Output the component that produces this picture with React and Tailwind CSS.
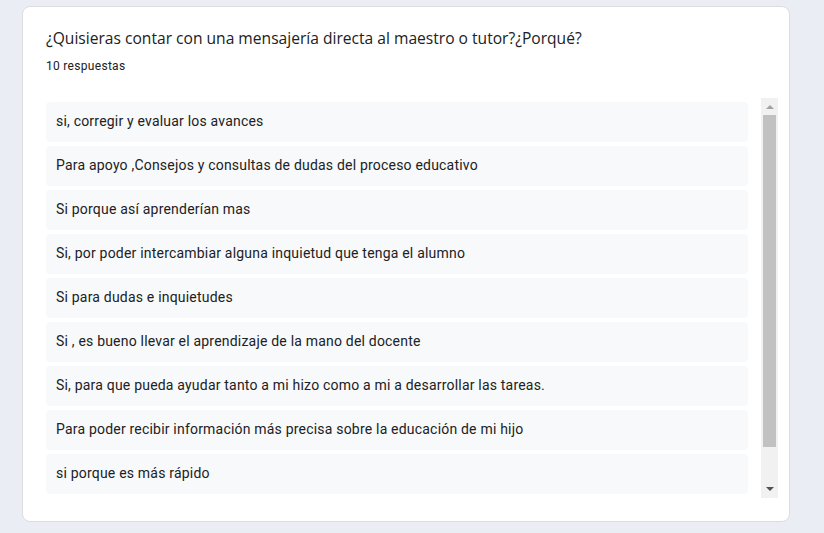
const answers = [
  "si, corregir y evaluar los avances",
  "Para apoyo ,Consejos y consultas de dudas del proceso educativo",
  "Si porque así aprenderían mas",
  "Si, por poder intercambiar alguna inquietud que tenga el alumno",
  "Si para dudas e inquietudes",
  "Si , es bueno llevar el aprendizaje de la mano del docente",
  "Si, para que pueda ayudar tanto a mi hizo como a mi a desarrollar las tareas.",
  "Para poder recibir información más precisa sobre la educación de mi hijo",
  "si porque es más rápido",
]

function Scrollbar() {
  return (
    <div className="flex w-[17px] shrink-0 flex-col bg-[#f1f1f1]">
      <div className="flex h-[17px] items-center justify-center">
        <svg width="8" height="5" viewBox="0 0 8 5">
          <path d="M0 5 L4 1 L8 5 Z" fill="#a3a3a3" />
        </svg>
      </div>
      <div className="mx-[2px] h-[332px] bg-[#c1c1c1]" />
      <div className="flex-1" />
      <div className="flex h-[17px] items-center justify-center">
        <svg width="8" height="5" viewBox="0 0 8 5">
          <path d="M0 0 L4 4 L8 0 Z" fill="#505050" />
        </svg>
      </div>
    </div>
  )
}

export default function App() {
  return (
    <div className="min-h-[533px] bg-[#ebedf5] pt-[6px] pl-[22px]">
      <div className="w-[768px] h-[516px] rounded-[8px] border border-[#dadce0] bg-white pl-[23px] pr-[11px] pt-[19px]">
        <h2 className="text-[15.6px] leading-[24px] text-[#202124] font-['Open_Sans',sans-serif]">
          ¿Quisieras contar con una mensajería directa al maestro o tutor?¿Porqué?
        </h2>
        <p className="mt-[8px] text-[12px] leading-[16px] tracking-[0.3px] text-[#202124] font-['Roboto',sans-serif]">
          10 respuestas
        </p>

        <div className="mt-[24px] flex h-[400px]">
          <div className="flex-1 overflow-hidden pt-[4px] pr-[13px]">
            <div className="flex flex-col gap-[4px]">
              {answers.map((a, i) => (
                <div
                  key={i}
                  className="flex h-[40px] items-center rounded-[4px] bg-[#f8f9fa] px-[10px] pb-[2px] text-[14px] tracking-[0.2px] text-[#202124] font-['Roboto',sans-serif]"
                >
                  {a}
                </div>
              ))}
            </div>
          </div>
          <Scrollbar />
        </div>
      </div>
    </div>
  )
}
